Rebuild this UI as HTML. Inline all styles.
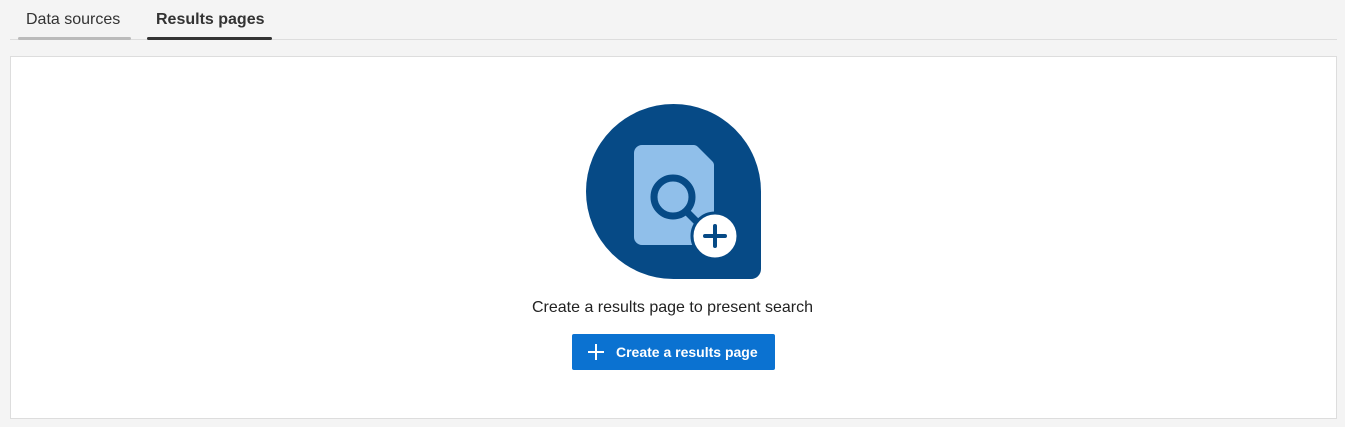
<!DOCTYPE html>
<html><head><style>
body{margin:0;width:1345px;height:427px;background:#f4f4f4;font-family:"Liberation Sans",sans-serif;position:relative;overflow:hidden}
.tab{position:absolute;top:11px;font-size:16px;color:#333}
.line{position:absolute;top:39px;left:10px;width:1327px;height:1px;background:#ddd}
.card{position:absolute;left:10px;top:56px;width:1325px;height:361px;background:#fff;border:1px solid #ddd}
.msg{position:absolute;left:0;width:1345px;top:299px;text-align:center;font-size:16px;color:#222}
.btn{position:absolute;left:572px;top:334px;width:203px;height:36px;background:#0b72d1;border-radius:2px;color:#fff;font-weight:bold;font-size:14px;line-height:36px;box-sizing:border-box;padding-left:44px}
</style></head><body>
<div class="tab" style="left:26px">Data sources</div>
<div class="tab" style="left:156px;font-weight:bold">Results pages</div>
<div class="line"></div>
<div style="position:absolute;left:18px;top:37px;width:113px;height:3px;background:#bbb;border-radius:2px"></div>
<div style="position:absolute;left:147px;top:37px;width:125px;height:3px;background:#333;border-radius:2px"></div>
<div class="card"></div>
<div class="msg">Create a results page to present search</div>
<div class="btn">Create a results page</div>
<svg style="position:absolute;left:0;top:0;z-index:2" width="1345" height="427">
<path d="M673.5 104 A87.5 87.5 0 0 0 673.5 279 H751 a10 10 0 0 0 10 -10 V191.5 A87.5 87.5 0 0 0 673.5 104 Z" fill="#064a86"/>
<path d="M642 145 H694 a6 6 0 0 1 4 2 L712 161 a6 6 0 0 1 2 4 V237 a8 8 0 0 1 -8 8 H642 a8 8 0 0 1 -8 -8 V153 a8 8 0 0 1 8 -8 Z" fill="#90bfea"/>
<circle cx="673" cy="197" r="19" fill="none" stroke="#064a86" stroke-width="7"/>
<line x1="686" y1="211" x2="697" y2="222" stroke="#064a86" stroke-width="7"/>
<circle cx="715" cy="236" r="23" fill="#fff" stroke="#064a86" stroke-width="3"/>
<path d="M715 226 V246 M705 236 H725" stroke="#064a86" stroke-width="4" stroke-linecap="round"/>
<path d="M596 344 V360 M588 352 H604" stroke="#fff" stroke-width="2"/>
</svg>
</body></html>
